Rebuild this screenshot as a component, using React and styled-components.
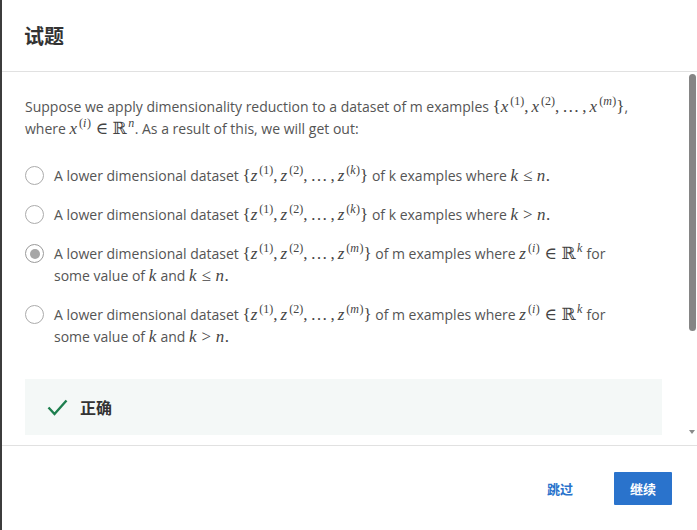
import React from "react";
import styled, { createGlobalStyle } from "styled-components";

const GlobalStyle = createGlobalStyle`
  html, body {
    margin: 0;
    padding: 0;
    background: #ffffff;
  }
  body {
    font-family: "Open Sans", "Noto Sans CJK SC", sans-serif;
  }
`;

const Dialog = styled.div`
  width: 697px;
  height: 530px;
  box-sizing: border-box;
  border-left: 2px solid #3c3c3c;
  display: flex;
  flex-direction: column;
  background: #fff;
  overflow: hidden;
`;

const Header = styled.header`
  height: 71px;
  flex-shrink: 0;
  display: flex;
  align-items: center;
  padding-left: 22px;
  border-bottom: 1px solid #e1e1e1;
`;

const Title = styled.h2`
  margin: 0;
  font-family: "Noto Sans CJK SC", sans-serif;
  font-size: 20px;
  font-weight: 700;
  color: #333;
`;

const Body = styled.div`
  flex: 1;
  display: flex;
  min-height: 0;
`;

const Content = styled.div`
  flex: 1;
  overflow: hidden;
  padding: 24px 25px 0 23px;
  color: #555;
  font-size: 14px;
  line-height: 22px;
`;

const ScrollTrack = styled.div`
  width: 10px;
  flex-shrink: 0;
  display: flex;
  flex-direction: column;
  align-items: center;
  padding: 2px 0 6px;
  box-sizing: border-box;
`;

const Thumb = styled.div`
  width: 7px;
  height: 257px;
  border-radius: 4px;
  background: #858585;
`;

const ArrowDown = styled.div`
  margin-top: auto;
  width: 0;
  height: 0;
  border-left: 3px solid transparent;
  border-right: 3px solid transparent;
  border-top: 4px solid #8a8a8a;
  margin-bottom: 5px;
`;

const Question = styled.p`
  margin: 0 0 25px;
`;

const Options = styled.div`
  display: flex;
  flex-direction: column;
  gap: 17px;
`;

const Option = styled.label`
  display: flex;
  align-items: flex-start;
  gap: 10px;
  cursor: pointer;
`;

const Radio = styled.span`
  flex-shrink: 0;
  width: 19px;
  height: 19px;
  margin-top: 1px;
  box-sizing: border-box;
  border-radius: 50%;
  border: 1.5px solid ${(p) => (p.$checked ? "#9a9a9a" : "#ababab")};
  display: flex;
  align-items: center;
  justify-content: center;

  &::after {
    content: "";
    width: 10px;
    height: 10px;
    border-radius: 50%;
    background: ${(p) => (p.$checked ? "#a6a6a6" : "transparent")};
  }
`;

const OptionText = styled.span`
  max-width: 578px;
`;

const Math = styled.span`
  font-family: "Liberation Serif", "DejaVu Serif", serif;
  font-size: 17px;
  color: #444;
  white-space: nowrap;
`;

const V = styled.i`
  font-style: italic;
  margin-right: 0.5px;
`;

const Rel = styled.span`
  margin: 0 4.5px;
`;

const Punct = styled.span`
  margin-right: 3px;
`;

const Sup = styled.sup`
  font-size: 12px;
  line-height: 0;
  vertical-align: baseline;
  position: relative;
  top: -7px;
  margin-left: 1.5px;
`;

const Set = ({ v, last }) => (
  <Math>
    {"{"}
    <V>{v}</V>
    <Sup>(1)</Sup>
    <Punct>,</Punct>
    <V>{v}</V>
    <Sup>(2)</Sup>
    <Punct>,</Punct>
    <Punct>…</Punct>
    <Punct>,</Punct>
    <V>{v}</V>
    <Sup>
      (<V>{last}</V>)
    </Sup>
    {"}"}
  </Math>
);

const Feedback = styled.div`
  margin-top: 31px;
  height: 56px;
  background: #f4f8f7;
  display: flex;
  align-items: center;
  padding-left: 22px;
  gap: 12px;
`;

const FeedbackText = styled.span`
  font-family: "Noto Sans CJK SC", sans-serif;
  font-size: 16px;
  font-weight: 600;
  color: #333;
`;

const Footer = styled.footer`
  height: 84px;
  flex-shrink: 0;
  border-top: 1px solid #e1e1e1;
  display: flex;
  align-items: center;
  justify-content: flex-end;
  padding-right: 25px;
  gap: 25px;
`;

const Button = styled.button`
  font-family: "Noto Sans CJK SC", sans-serif;
  font-size: 13px;
  font-weight: 700;
  height: 33px;
  padding: 0 16px;
  border: none;
  border-radius: 1px;
  cursor: pointer;
  color: ${(p) => (p.$primary ? "#fff" : "#2a73cc")};
  background: ${(p) => (p.$primary ? "#2a73cc" : "transparent")};
`;

const Compare = ({ op }) => (
  <Math>
    <V>k</V>
    <Rel>{op}</Rel>
    <V>n</V>.
  </Math>
);

const Member = ({ v, sup, space }) => (
  <Math>
    <V>{v}</V>
    <Sup>{sup}</Sup>
    <Rel>∈</Rel>ℝ
    <Sup>
      <V>{space}</V>
    </Sup>
  </Math>
);

const options = [
  {
    id: 1,
    body: (
      <>
        A lower dimensional dataset <Set v="z" last="k" /> of k examples where{" "}
        <Compare op="≤" />
      </>
    ),
  },
  {
    id: 2,
    body: (
      <>
        A lower dimensional dataset <Set v="z" last="k" /> of k examples where{" "}
        <Compare op=">" />
      </>
    ),
  },
  {
    id: 3,
    checked: true,
    body: (
      <>
        A lower dimensional dataset <Set v="z" last="m" /> of m examples where{" "}
        <Member v="z" sup={<>(<V>i</V>)</>} space="k" /> for some value of{" "}
        <Math>
          <V>k</V>
        </Math>{" "}
        and <Compare op="≤" />
      </>
    ),
  },
  {
    id: 4,
    body: (
      <>
        A lower dimensional dataset <Set v="z" last="m" /> of m examples where{" "}
        <Member v="z" sup={<>(<V>i</V>)</>} space="k" /> for some value of{" "}
        <Math>
          <V>k</V>
        </Math>{" "}
        and <Compare op=">" />
      </>
    ),
  },
];

const CheckIcon = () => (
  <svg width="21" height="17" viewBox="0 0 21 17">
    <path
      d="M1.5 8.5 L7.5 15 L19.5 1.5"
      fill="none"
      stroke="#1e7f4f"
      strokeWidth="2.4"
    />
  </svg>
);

const App = () => {
  return (
    <Dialog>
      <GlobalStyle />
      <Header>
        <Title>试题</Title>
      </Header>
      <Body>
        <Content>
          <Question>
            Suppose we apply dimensionality reduction to a dataset of m examples{" "}
            <Set v="x" last="m" />, where{" "}
            <Member v="x" sup={<>(<V>i</V>)</>} space="n" />. As a result of
            this, we will get out:
          </Question>
          <Options>
            {options.map((o) => (
              <Option key={o.id}>
                <Radio $checked={o.checked} />
                <OptionText>{o.body}</OptionText>
              </Option>
            ))}
          </Options>
          <Feedback>
            <CheckIcon />
            <FeedbackText>正确</FeedbackText>
          </Feedback>
        </Content>
        <ScrollTrack>
          <Thumb />
          <ArrowDown />
        </ScrollTrack>
      </Body>
      <Footer>
        <Button>跳过</Button>
        <Button $primary>继续</Button>
      </Footer>
    </Dialog>
  );
};

export default App;
